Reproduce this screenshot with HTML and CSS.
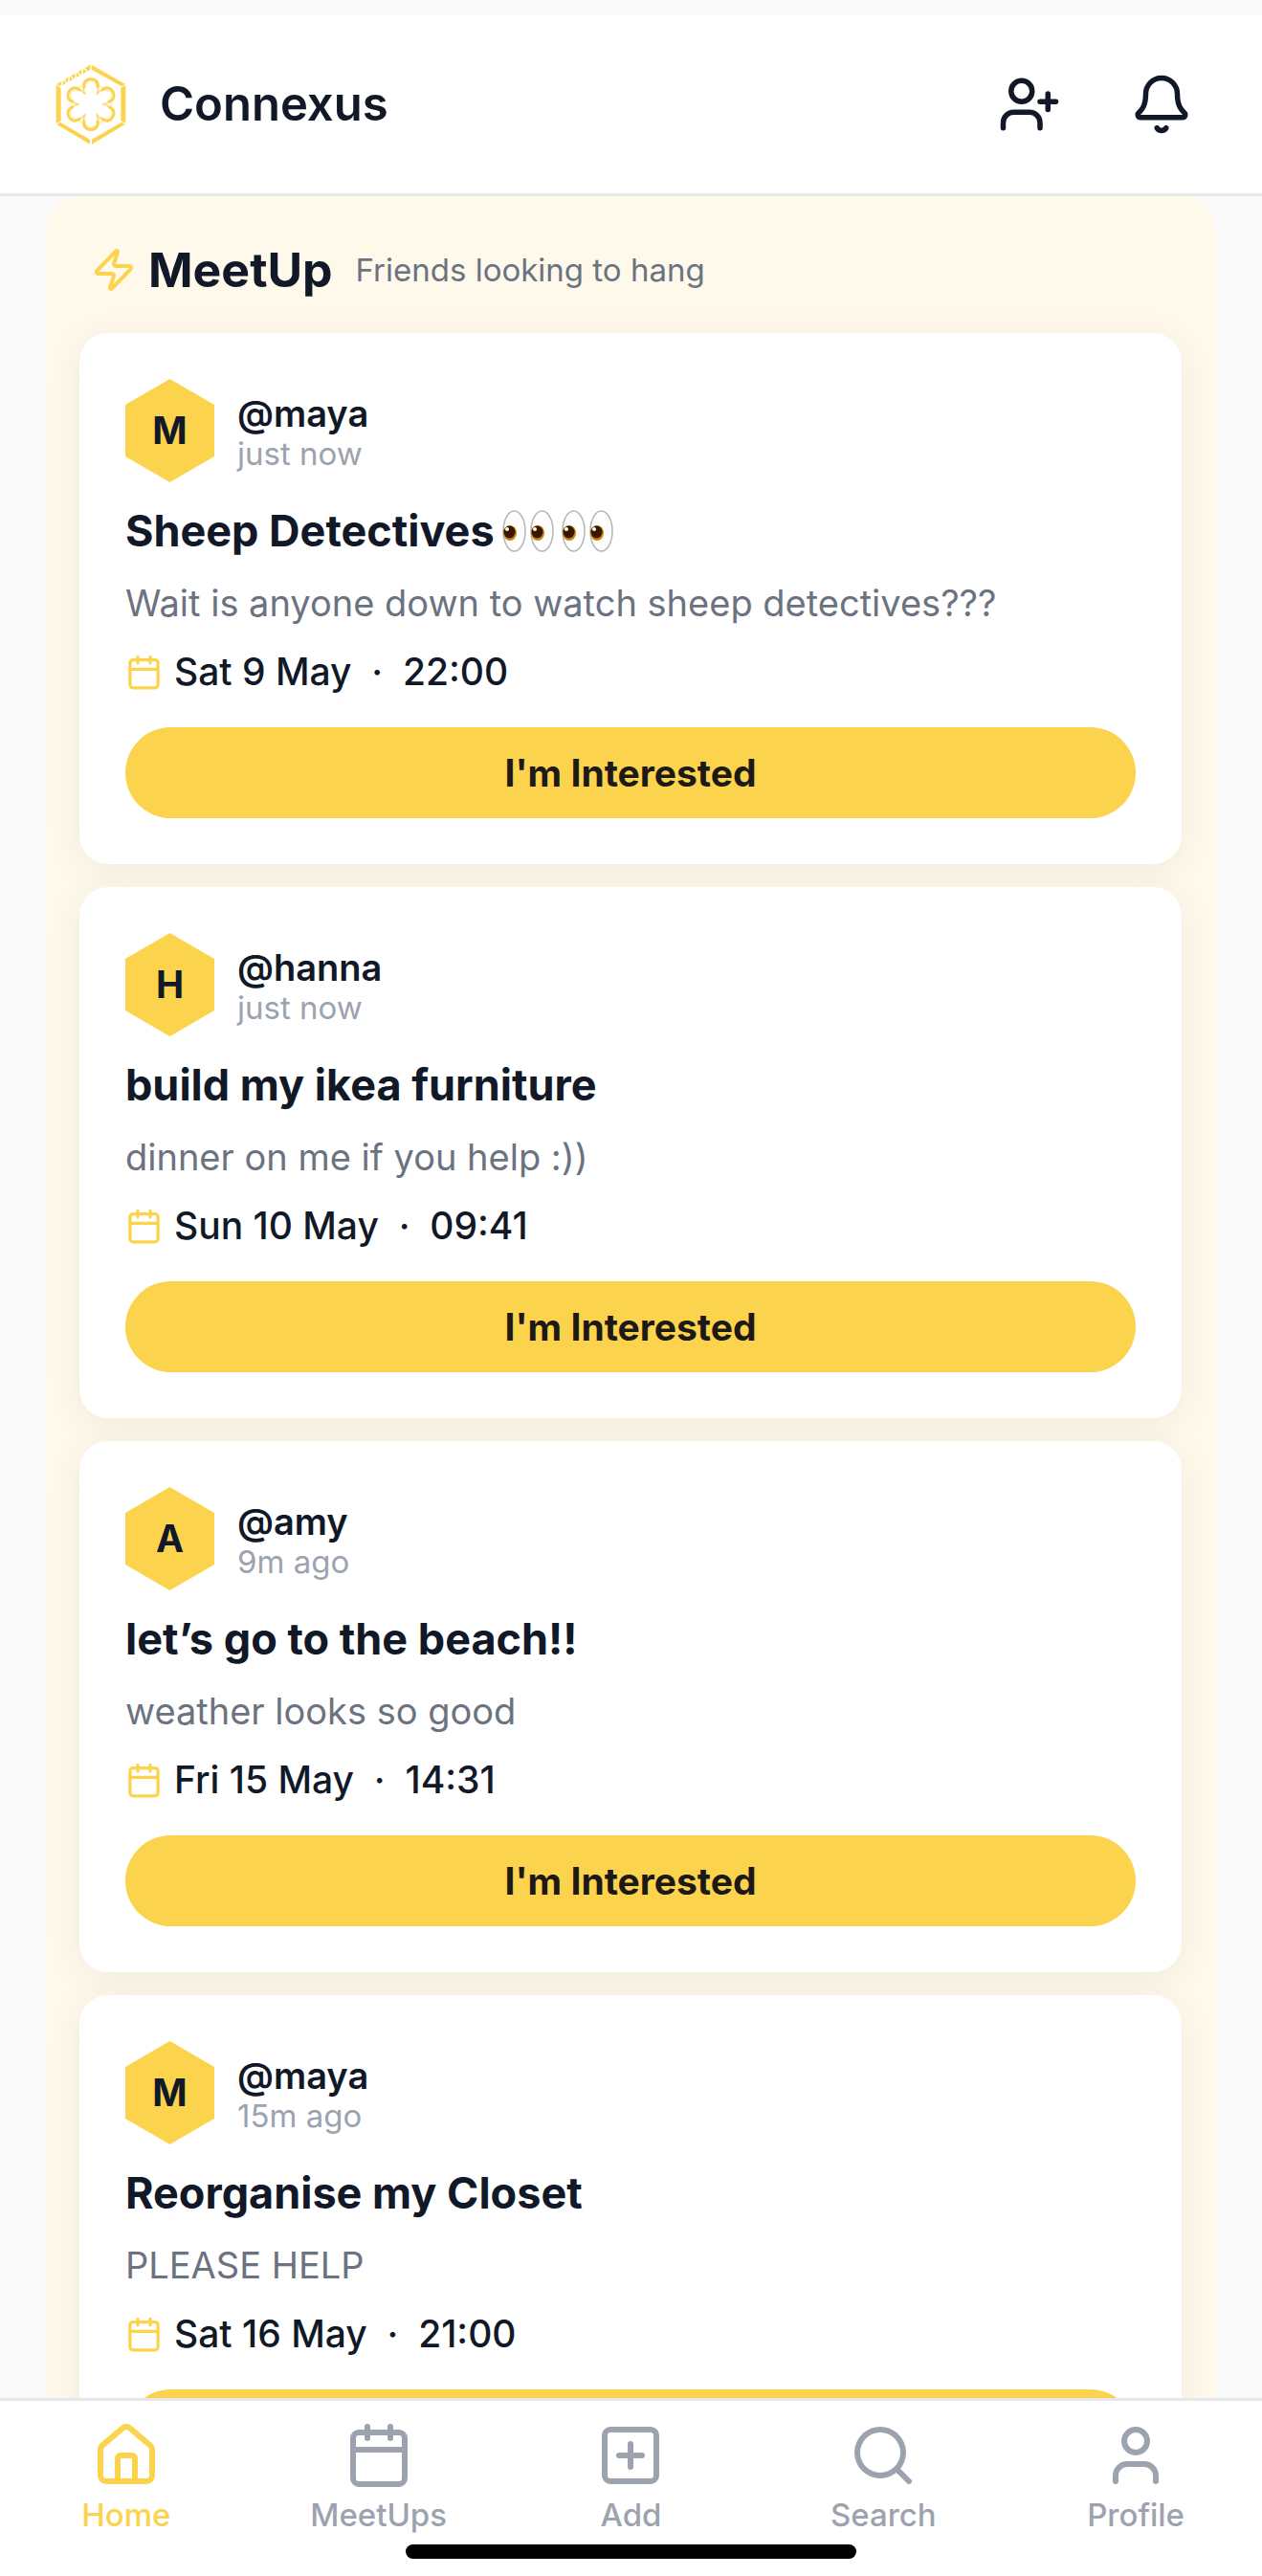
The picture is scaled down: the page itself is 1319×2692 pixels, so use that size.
FILE: index.html
```html
<!DOCTYPE html>
<html lang="en">
<head>
    <meta charset="UTF-8">
    <meta name="viewport" content="width=device-width, initial-scale=1.0">
    <title>Connexus</title>
    <link rel="stylesheet" href="styles.css">
</head>
<body>
    <!-- Shared icons -->
    <svg class="sprite" aria-hidden="true">
        <symbol id="calendar" viewBox="0 0 24 24">
            <path d="M8 2v4M16 2v4M3 10h18"/>
            <rect x="3" y="4" width="18" height="18" rx="2"/>
        </symbol>
        <symbol id="eyes" viewBox="0 0 54 44">
            <ellipse cx="12.5" cy="22" rx="11.5" ry="21" fill="#fdfdfd" stroke="#b5b5b5" stroke-width="1.5"/>
            <ellipse cx="41.5" cy="22" rx="11.5" ry="21" fill="#fdfdfd" stroke="#b5b5b5" stroke-width="1.5"/>
            <ellipse cx="8" cy="24" rx="7" ry="8" fill="#c28a08"/>
            <ellipse cx="37" cy="24" rx="7" ry="8" fill="#c28a08"/>
            <ellipse cx="7.5" cy="23" rx="6" ry="6.5" fill="#3a1600"/>
            <ellipse cx="36.5" cy="23" rx="6" ry="6.5" fill="#3a1600"/>
            <circle cx="5" cy="20" r="2" fill="#fff"/>
            <circle cx="34" cy="20" r="2" fill="#fff"/>
        </symbol>
    </svg>

    <!-- Top bar -->
    <header class="topbar">
        <a class="brand" href="#">
            <svg class="logo" viewBox="-144 -144 288 288" aria-hidden="true">
                <g class="logo-frame">
                    <path d="M2-124L108-63L96-56L2-109Z"/>
                    <path d="M94-52L109-60V60L94 52Z"/>
                    <path d="M96 56L107 63L3 125V110Z"/>
                    <path d="M-96 56L-107 63L-3 125V110Z"/>
                    <path d="M-94-52L-109-60V60L-94 52Z"/>
                    <path d="M-2-124L-108-63L-96-56L-2-109Z"/>
                </g>
                <path class="logo-cuts" d="M-96-50L-86-80L-72-62L-66-92L-50-74L-46-104L-29-86L-25-116L-8-100"/>
                <path class="logo-ring" d="M0-74L64-37V37L0 74L-64 37V-37Z"/>
                <g id="petals">
                    <g id="petal">
                        <path class="petal-side" d="M-18-31C-22-40-24-50-23-60M18-31C22-40 24-50 23-60"/>
                        <path class="petal-tip" d="M-21-54C-28-88 28-88 21-54"/>
                    </g>
                    <use href="#petal" transform="rotate(60)"/>
                    <use href="#petal" transform="rotate(120)"/>
                    <use href="#petal" transform="rotate(180)"/>
                    <use href="#petal" transform="rotate(240)"/>
                    <use href="#petal" transform="rotate(300)"/>
                </g>
            </svg>
            <span class="brand-name">Connexus</span>
        </a>
        <div class="actions">
            <button class="icon-button" aria-label="Add friend">
                <svg class="icon icon-action" viewBox="0 0 24 24">
                    <path d="M16 21v-2a4 4 0 0 0-4-4H6a4 4 0 0 0-4 4v2M19 8v6M22 11h-6"/>
                    <circle cx="9" cy="7" r="4"/>
                </svg>
            </button>
            <button class="icon-button" aria-label="Notifications">
                <svg class="icon icon-action" viewBox="0 0 24 24">
                    <path d="M10.268 21a2 2 0 0 0 3.464 0"/>
                    <path d="M3.262 15.326A1 1 0 0 0 4 17h16a1 1 0 0 0 .74-1.673C19.41 13.956 18 12.499 18 8A6 6 0 0 0 6 8c0 4.499-1.411 5.956-2.738 7.326"/>
                </svg>
            </button>
        </div>
    </header>

    <!-- Feed -->
    <main class="feed">
        <section class="panel">
            <div class="panel-header">
                <svg class="icon icon-bolt" viewBox="0 0 24 24" aria-hidden="true">
                    <path d="M4 14a1 1 0 0 1-.78-1.63l9.9-10.2a.5.5 0 0 1 .86.46l-1.92 6.02A1 1 0 0 0 13 10h7a1 1 0 0 1 .78 1.63l-9.9 10.2a.5.5 0 0 1-.86-.46l1.92-6.02A1 1 0 0 0 11 14z"/>
                </svg>
                <h1>MeetUp</h1>
                <p>Friends looking to hang</p>
            </div>

            <article class="card">
                <div class="author">
                    <div class="avatar">M</div>
                    <div class="author-info">
                        <div class="username">@maya</div>
                        <div class="time">just now</div>
                    </div>
                </div>
                <h2>Sheep Detectives<svg class="emoji" role="img" aria-label="eyes"><use href="#eyes"/></svg><svg class="emoji" role="img" aria-label="eyes"><use href="#eyes"/></svg></h2>
                <p class="description">Wait is anyone down to watch sheep detectives???</p>
                <div class="date">
                    <svg class="icon icon-date" aria-hidden="true"><use href="#calendar"/></svg>
                    <span>Sat 9 May &nbsp;·&nbsp; 22:00</span>
                </div>
                <button class="interested">I'm Interested</button>
            </article>

            <article class="card">
                <div class="author">
                    <div class="avatar">H</div>
                    <div class="author-info">
                        <div class="username">@hanna</div>
                        <div class="time">just now</div>
                    </div>
                </div>
                <h2>build my ikea furniture</h2>
                <p class="description">dinner on me if you help :))</p>
                <div class="date">
                    <svg class="icon icon-date" aria-hidden="true"><use href="#calendar"/></svg>
                    <span>Sun 10 May &nbsp;·&nbsp; 09:41</span>
                </div>
                <button class="interested">I'm Interested</button>
            </article>

            <article class="card">
                <div class="author">
                    <div class="avatar">A</div>
                    <div class="author-info">
                        <div class="username">@amy</div>
                        <div class="time">9m ago</div>
                    </div>
                </div>
                <h2>let’s go to the beach!!</h2>
                <p class="description">weather looks so good</p>
                <div class="date">
                    <svg class="icon icon-date" aria-hidden="true"><use href="#calendar"/></svg>
                    <span>Fri 15 May &nbsp;·&nbsp; 14:31</span>
                </div>
                <button class="interested">I'm Interested</button>
            </article>

            <article class="card">
                <div class="author">
                    <div class="avatar">M</div>
                    <div class="author-info">
                        <div class="username">@maya</div>
                        <div class="time">15m ago</div>
                    </div>
                </div>
                <h2>Reorganise my Closet</h2>
                <p class="description">PLEASE HELP</p>
                <div class="date">
                    <svg class="icon icon-date" aria-hidden="true"><use href="#calendar"/></svg>
                    <span>Sat 16 May &nbsp;·&nbsp; 21:00</span>
                </div>
                <button class="interested">I'm Interested</button>
            </article>
        </section>
    </main>

    <!-- Bottom tabs -->
    <nav class="tabbar">
        <a class="tab active" href="#">
            <svg class="icon icon-tab" viewBox="0 0 24 24" aria-hidden="true">
                <path d="M15 21v-8a1 1 0 0 0-1-1h-4a1 1 0 0 0-1 1v8"/>
                <path d="M3 10a2 2 0 0 1 .709-1.528l7-5.999a2 2 0 0 1 2.582 0l7 5.999A2 2 0 0 1 21 10v9a2 2 0 0 1-2 2H5a2 2 0 0 1-2-2z"/>
            </svg>
            Home
        </a>
        <a class="tab" href="#">
            <svg class="icon icon-tab" aria-hidden="true"><use href="#calendar"/></svg>
            MeetUps
        </a>
        <a class="tab" href="#">
            <svg class="icon icon-tab" viewBox="0 0 24 24" aria-hidden="true">
                <rect x="3" y="3" width="18" height="18" rx="2"/>
                <path d="M8 12h8M12 8v8"/>
            </svg>
            Add
        </a>
        <a class="tab" href="#">
            <svg class="icon icon-tab" viewBox="0 0 24 24" aria-hidden="true">
                <circle cx="11" cy="11" r="8"/>
                <path d="m21 21-4.3-4.3"/>
            </svg>
            Search
        </a>
        <a class="tab" href="#">
            <svg class="icon icon-tab" viewBox="0 0 24 24" aria-hidden="true">
                <path d="M19 21v-2a4 4 0 0 0-4-4H9a4 4 0 0 0-4 4v2"/>
                <circle cx="12" cy="7" r="4"/>
            </svg>
            Profile
        </a>
        <div class="home-indicator"></div>
    </nav>
</body>
</html>
```
FILE: styles.css
```css
* {
    box-sizing: border-box;
}

body {
    display: flex;
    flex-direction: column;
    height: 100vh;
    margin: 0;
    padding-top: 16px;
    background-color: #fafafa;
    color: #111827;
    font-family: Inter, "Liberation Sans", sans-serif;
    font-size: 38px;
    line-height: 48px;
}

h1, h2, p {
    margin: 0;
}

a {
    color: inherit;
    text-decoration: none;
}

button {
    border: none;
    font-family: inherit;
    cursor: pointer;
}

.sprite {
    position: absolute;
    width: 0;
    height: 0;
}

.icon {
    flex-shrink: 0;
    fill: none;
    stroke: currentColor;
    stroke-width: 2;
    stroke-linecap: round;
    stroke-linejoin: round;
}

/* Top bar */
.topbar {
    display: flex;
    flex-shrink: 0;
    align-items: center;
    justify-content: space-between;
    padding: 45px 60px 45px 47px;
    background-color: #fff;
    border-bottom: 3px solid #e5e7eb;
}

.brand {
    display: flex;
    align-items: center;
    gap: 24px;
}

.brand-name {
    font-size: 49px;
    font-weight: 600;
}

.logo {
    width: 96px;
    height: 96px;
}

.logo-frame {
    fill: #fcd34d;
}

.logo-cuts {
    fill: none;
    stroke: #fff;
    stroke-width: 4;
}

.logo-ring {
    fill: none;
    stroke: #fef0c0;
    stroke-width: 5;
}

.petal-side {
    fill: none;
    stroke: #fcdc78;
    stroke-width: 5;
}

.petal-tip {
    fill: none;
    stroke: #fcd34d;
    stroke-width: 9;
    stroke-linecap: round;
}

.actions {
    display: flex;
    gap: 48px;
}

.icon-button {
    display: flex;
    padding: 12px;
    background: none;
    color: #111827;
}

.icon-action {
    width: 66px;
    height: 66px;
}

/* Feed */
.feed {
    flex: 1;
    min-height: 0;
    padding: 0 48px 0 47px;
    overflow-y: auto;
    scrollbar-width: none;
}

.panel {
    display: flex;
    flex-direction: column;
    gap: 24px;
    margin-top: -6px;
    padding: 48px 36px;
    background-color: #fff9ec;
    border-radius: 48px;
}

.panel-header {
    display: flex;
    align-items: center;
    padding: 5px 12px 12px;
    line-height: 60px;
}

.icon-bolt {
    width: 48px;
    height: 48px;
    margin-right: 12px;
    color: #fcd34d;
}

.panel-header h1 {
    margin-right: 24px;
    font-size: 50px;
    font-weight: 700;
}

.panel-header p {
    color: #6b7280;
    font-size: 33px;
}

.card {
    display: flex;
    flex-direction: column;
    gap: 24px;
    padding: 48px;
    background-color: #fff;
    border-radius: 30px;
    box-shadow: 0 6px 36px rgba(20, 50, 20, 0.07);
}

.author {
    display: flex;
    align-items: center;
    gap: 24px;
}

.avatar {
    display: flex;
    align-items: center;
    justify-content: center;
    width: 93px;
    height: 108px;
    background-color: #fcd34d;
    clip-path: polygon(50% 0, 100% 25%, 100% 75%, 50% 100%, 0 75%, 0 25%);
    font-size: 39px;
    font-weight: 700;
}

.author-info {
    padding-top: 3px;
}

.username {
    font-weight: 600;
    line-height: 44px;
}

.time {
    color: #9ca3af;
    font-size: 33px;
    line-height: 40px;
}

.card h2 {
    display: flex;
    align-items: center;
    font-size: 45px;
    font-weight: 700;
    line-height: 54px;
}

.emoji {
    width: 54px;
    height: 44px;
    margin-left: 8px;
}

.description {
    color: #6b7280;
}

.date {
    display: flex;
    align-items: center;
    gap: 12px;
    font-size: 39px;
    font-weight: 500;
}

.icon-date {
    width: 39px;
    height: 39px;
    color: #fcd34d;
}

.interested {
    height: 95px;
    margin-top: 10px;
    background-color: #fcd34d;
    border-radius: 48px;
    color: #1c1917;
    font-size: 39px;
    font-weight: 700;
}

/* Bottom tabs */
.tabbar {
    position: relative;
    display: flex;
    flex-shrink: 0;
    padding: 21px 0 44px;
    background-color: #fff;
    border-top: 3px solid #e5e7eb;
}

.tab {
    display: flex;
    flex: 1;
    flex-direction: column;
    align-items: center;
    gap: 6px;
    color: #9ca3af;
    font-size: 33px;
    font-weight: 500;
    line-height: 40px;
}

.tab.active {
    color: #fcd34d;
}

.icon-tab {
    width: 72px;
    height: 72px;
}

.home-indicator {
    position: absolute;
    bottom: 18px;
    left: 50%;
    width: 471px;
    height: 15px;
    margin-left: -236px;
    background-color: #000;
    border-radius: 8px;
}
```
